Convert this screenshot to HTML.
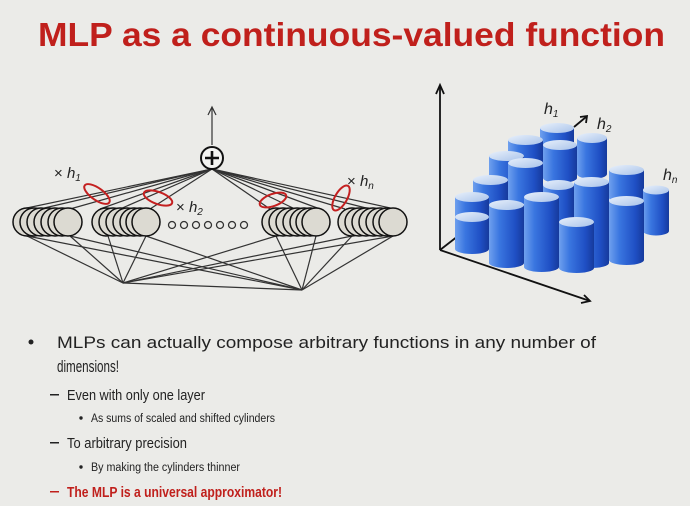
<!DOCTYPE html>
<html><head><meta charset="utf-8"><style>
html,body{margin:0;padding:0;background:#ebebe8;}
svg{display:block;}
text{font-family:"Liberation Sans",sans-serif;}
</style></head><body>
<svg width="690" height="506" viewBox="0 0 690 506" xmlns="http://www.w3.org/2000/svg">
<defs>
<linearGradient id="cb" x1="0" x2="1" y1="0" y2="0">
<stop offset="0" stop-color="#6fa0ee"/><stop offset="0.3" stop-color="#3a76e0"/><stop offset="0.75" stop-color="#1f4fc4"/><stop offset="1" stop-color="#163a9c"/>
</linearGradient>
<linearGradient id="ct" x1="0" x2="1" y1="0" y2="1">
<stop offset="0" stop-color="#e8f0fb"/><stop offset="1" stop-color="#a9c3ea"/>
</linearGradient>
</defs>
<rect width="690" height="506" fill="#ebebe8"/>
<text x="38" y="46" font-size="33" font-weight="bold" fill="#c0201c" textLength="627" lengthAdjust="spacingAndGlyphs">MLP as a continuous-valued function</text>

<g stroke="#333" stroke-width="1.2" fill="none">
<line x1="212" y1="145" x2="212" y2="108"/>
<polyline points="208,115 212,107 216,115"/>
<line x1="212" y1="169" x2="22" y2="209"/><line x1="212" y1="169" x2="40" y2="209"/><line x1="212" y1="169" x2="70" y2="209"/>
<line x1="212" y1="169" x2="100" y2="209"/><line x1="212" y1="169" x2="120" y2="209"/><line x1="212" y1="169" x2="150" y2="209"/>
<line x1="212" y1="169" x2="270" y2="209"/><line x1="212" y1="169" x2="295" y2="209"/><line x1="212" y1="169" x2="320" y2="209"/>
<line x1="212" y1="169" x2="345" y2="209"/><line x1="212" y1="169" x2="370" y2="209"/><line x1="212" y1="169" x2="395" y2="209"/>
<line x1="123" y1="283" x2="27" y2="236"/><line x1="123" y1="283" x2="70" y2="236"/><line x1="123" y1="283" x2="108" y2="236"/><line x1="123" y1="283" x2="146" y2="236"/>
<line x1="123" y1="283" x2="276" y2="236"/><line x1="123" y1="283" x2="352" y2="236"/><line x1="123" y1="283" x2="393" y2="236"/>
<line x1="302" y1="290" x2="27" y2="236"/><line x1="302" y1="290" x2="70" y2="236"/><line x1="302" y1="290" x2="146" y2="236"/>
<line x1="302" y1="290" x2="276" y2="236"/><line x1="302" y1="290" x2="316" y2="236"/><line x1="302" y1="290" x2="352" y2="236"/><line x1="302" y1="290" x2="393" y2="236"/>
<line x1="123" y1="283" x2="302" y2="290"/>
</g>
<g stroke="#111" stroke-width="1.5" fill="#dcdad2">
<ellipse cx="27" cy="222" rx="14" ry="14"/><ellipse cx="34" cy="222" rx="14" ry="14"/><ellipse cx="41" cy="222" rx="14" ry="14"/><ellipse cx="48" cy="222" rx="14" ry="14"/><ellipse cx="55" cy="222" rx="14" ry="14"/><ellipse cx="62" cy="222" rx="14" ry="14"/><ellipse cx="68" cy="222" rx="14" ry="14"/>
<ellipse cx="106" cy="222" rx="14" ry="14"/><ellipse cx="113" cy="222" rx="14" ry="14"/><ellipse cx="120" cy="222" rx="14" ry="14"/><ellipse cx="127" cy="222" rx="14" ry="14"/><ellipse cx="134" cy="222" rx="14" ry="14"/><ellipse cx="140" cy="222" rx="14" ry="14"/><ellipse cx="146" cy="222" rx="14" ry="14"/>
<ellipse cx="276" cy="222" rx="14" ry="14"/><ellipse cx="283" cy="222" rx="14" ry="14"/><ellipse cx="290" cy="222" rx="14" ry="14"/><ellipse cx="297" cy="222" rx="14" ry="14"/><ellipse cx="304" cy="222" rx="14" ry="14"/><ellipse cx="310" cy="222" rx="14" ry="14"/><ellipse cx="316" cy="222" rx="14" ry="14"/>
<ellipse cx="352" cy="222" rx="14" ry="14"/><ellipse cx="359" cy="222" rx="14" ry="14"/><ellipse cx="366" cy="222" rx="14" ry="14"/><ellipse cx="373" cy="222" rx="14" ry="14"/><ellipse cx="380" cy="222" rx="14" ry="14"/><ellipse cx="387" cy="222" rx="14" ry="14"/><ellipse cx="393" cy="222" rx="14" ry="14"/>
</g>
<g stroke="#333" stroke-width="1.3" fill="none">
<circle cx="172" cy="225" r="3.5"/><circle cx="184" cy="225" r="3.5"/><circle cx="196" cy="225" r="3.5"/><circle cx="208" cy="225" r="3.5"/><circle cx="220" cy="225" r="3.5"/><circle cx="232" cy="225" r="3.5"/><circle cx="244" cy="225" r="3.5"/>
</g>
<circle cx="212" cy="158" r="11" fill="#f4f4f2" stroke="#111" stroke-width="2"/>
<path d="M205 158h14M212 151v14" stroke="#111" stroke-width="2.6"/>
<g stroke="#c42020" stroke-width="2" fill="none">
<ellipse cx="97" cy="194" rx="15" ry="6" transform="rotate(35 97 194)"/>
<ellipse cx="158" cy="198" rx="15" ry="6" transform="rotate(20 158 198)"/>
<ellipse cx="273" cy="200" rx="14" ry="6" transform="rotate(-20 273 200)"/>
<ellipse cx="341" cy="198" rx="14" ry="6" transform="rotate(-60 341 198)"/>
</g>
<g font-family="Liberation Serif,serif" font-style="italic" fill="#222" font-size="15">
<text x="54" y="178"><tspan font-style="normal">× </tspan>h<tspan font-size="10" dy="3">1</tspan></text>
<text x="176" y="212"><tspan font-style="normal">× </tspan>h<tspan font-size="10" dy="3">2</tspan></text>
<text x="347" y="186"><tspan font-style="normal">× </tspan>h<tspan font-size="10" dy="3">n</tspan></text>
</g>

<g stroke="#111" stroke-width="1.8" fill="none">
<line x1="440" y1="250" x2="440" y2="86"/><polyline points="436,94 440,85 444,94"/>
<line x1="440" y1="250" x2="590" y2="301"/><polyline points="581,303 590,301 584,295"/>
<line x1="440" y1="250" x2="458" y2="236"/>
<line x1="574" y1="127" x2="586" y2="117"/><polyline points="580,117 587,116 586,123"/>
</g>
<g>
<path d="M540 128v40a17 5 0 0 0 34 0v-40z" fill="url(#cb)"/><ellipse cx="557" cy="128" rx="17" ry="5" fill="url(#ct)"/>
<path d="M508 140v40a17.5 5 0 0 0 35 0v-40z" fill="url(#cb)"/><ellipse cx="525.5" cy="140" rx="17.5" ry="5" fill="url(#ct)"/>
<path d="M577 138v36a15 5 0 0 0 30 0v-36z" fill="url(#cb)"/><ellipse cx="592" cy="138" rx="15" ry="5" fill="url(#ct)"/>
<path d="M543 145v33a17 5 0 0 0 34 0v-33z" fill="url(#cb)"/><ellipse cx="560" cy="145" rx="17" ry="5" fill="url(#ct)"/>
<path d="M489 156v40a17.5 5 0 0 0 35 0v-40z" fill="url(#cb)"/><ellipse cx="506.5" cy="156" rx="17.5" ry="5" fill="url(#ct)"/>
<path d="M508 163v36a17.5 5 0 0 0 35 0v-36z" fill="url(#cb)"/><ellipse cx="525.5" cy="163" rx="17.5" ry="5" fill="url(#ct)"/>
<path d="M609 170v28a17.5 5 0 0 0 35 0v-28z" fill="url(#cb)"/><ellipse cx="626.5" cy="170" rx="17.5" ry="5" fill="url(#ct)"/>
<path d="M473 180v35a17.5 5 0 0 0 35 0v-35z" fill="url(#cb)"/><ellipse cx="490.5" cy="180" rx="17.5" ry="5" fill="url(#ct)"/>
<path d="M543 185v40a15.5 5 0 0 0 31 0v-40z" fill="url(#cb)"/><ellipse cx="558.5" cy="185" rx="15.5" ry="5" fill="url(#ct)"/>
<path d="M574 182v81a17.5 5 0 0 0 35 0v-81z" fill="url(#cb)"/><ellipse cx="591.5" cy="182" rx="17.5" ry="5" fill="url(#ct)"/>
<path d="M643 190v41a13 4.5 0 0 0 26 0v-41z" fill="url(#cb)"/><ellipse cx="656" cy="190" rx="13" ry="4.5" fill="url(#ct)"/>
<path d="M455 197v20a17 5 0 0 0 34 0v-20z" fill="url(#cb)"/><ellipse cx="472" cy="197" rx="17" ry="5" fill="url(#ct)"/>
<path d="M524 197v70a17.5 5 0 0 0 35 0v-70z" fill="url(#cb)"/><ellipse cx="541.5" cy="197" rx="17.5" ry="5" fill="url(#ct)"/>
<path d="M489 205v58a17.5 5 0 0 0 35 0v-58z" fill="url(#cb)"/><ellipse cx="506.5" cy="205" rx="17.5" ry="5" fill="url(#ct)"/>
<path d="M609 201v59a17.5 5 0 0 0 35 0v-59z" fill="url(#cb)"/><ellipse cx="626.5" cy="201" rx="17.5" ry="5" fill="url(#ct)"/>
<path d="M455 217v32a17 5 0 0 0 34 0v-32z" fill="url(#cb)"/><ellipse cx="472" cy="217" rx="17" ry="5" fill="url(#ct)"/>
<path d="M559 222v46a17.5 5 0 0 0 35 0v-46z" fill="url(#cb)"/><ellipse cx="576.5" cy="222" rx="17.5" ry="5" fill="url(#ct)"/>
</g>
<g font-family="Liberation Serif,serif" font-style="italic" fill="#222" font-size="16">
<text x="544" y="114">h<tspan font-size="10" dy="3">1</tspan></text>
<text x="597" y="129">h<tspan font-size="10" dy="3">2</tspan></text>
<text x="663" y="180">h<tspan font-size="10" dy="3">n</tspan></text>
</g>

<g fill="#222">
<circle cx="31" cy="342" r="2.5"/>
<text x="57" y="348" font-size="17" textLength="539" lengthAdjust="spacingAndGlyphs">MLPs can actually compose arbitrary functions in any number of</text>
<text x="57" y="372" font-size="17" textLength="62" lengthAdjust="spacingAndGlyphs">dimensions!</text>
<rect x="50" y="394" width="9" height="1.5"/>
<text x="67" y="400" font-size="15" textLength="138" lengthAdjust="spacingAndGlyphs">Even with only one layer</text>
<circle cx="81" cy="418" r="1.7"/>
<text x="91" y="422" font-size="11.5" textLength="184" lengthAdjust="spacingAndGlyphs">As sums of scaled and shifted cylinders</text>
<rect x="50" y="442" width="9" height="1.5"/>
<text x="67" y="448" font-size="15" textLength="120" lengthAdjust="spacingAndGlyphs">To arbitrary precision</text>
<circle cx="81" cy="467" r="1.7"/>
<text x="91" y="471" font-size="11.5" textLength="149" lengthAdjust="spacingAndGlyphs">By making the cylinders thinner</text>
<rect x="50" y="491" width="9" height="1.5" fill="#c0201c"/>
<text x="67" y="497" font-size="15" font-weight="bold" fill="#c0201c" textLength="215" lengthAdjust="spacingAndGlyphs">The MLP is a universal approximator!</text>
</g>
</svg>
</body></html>
